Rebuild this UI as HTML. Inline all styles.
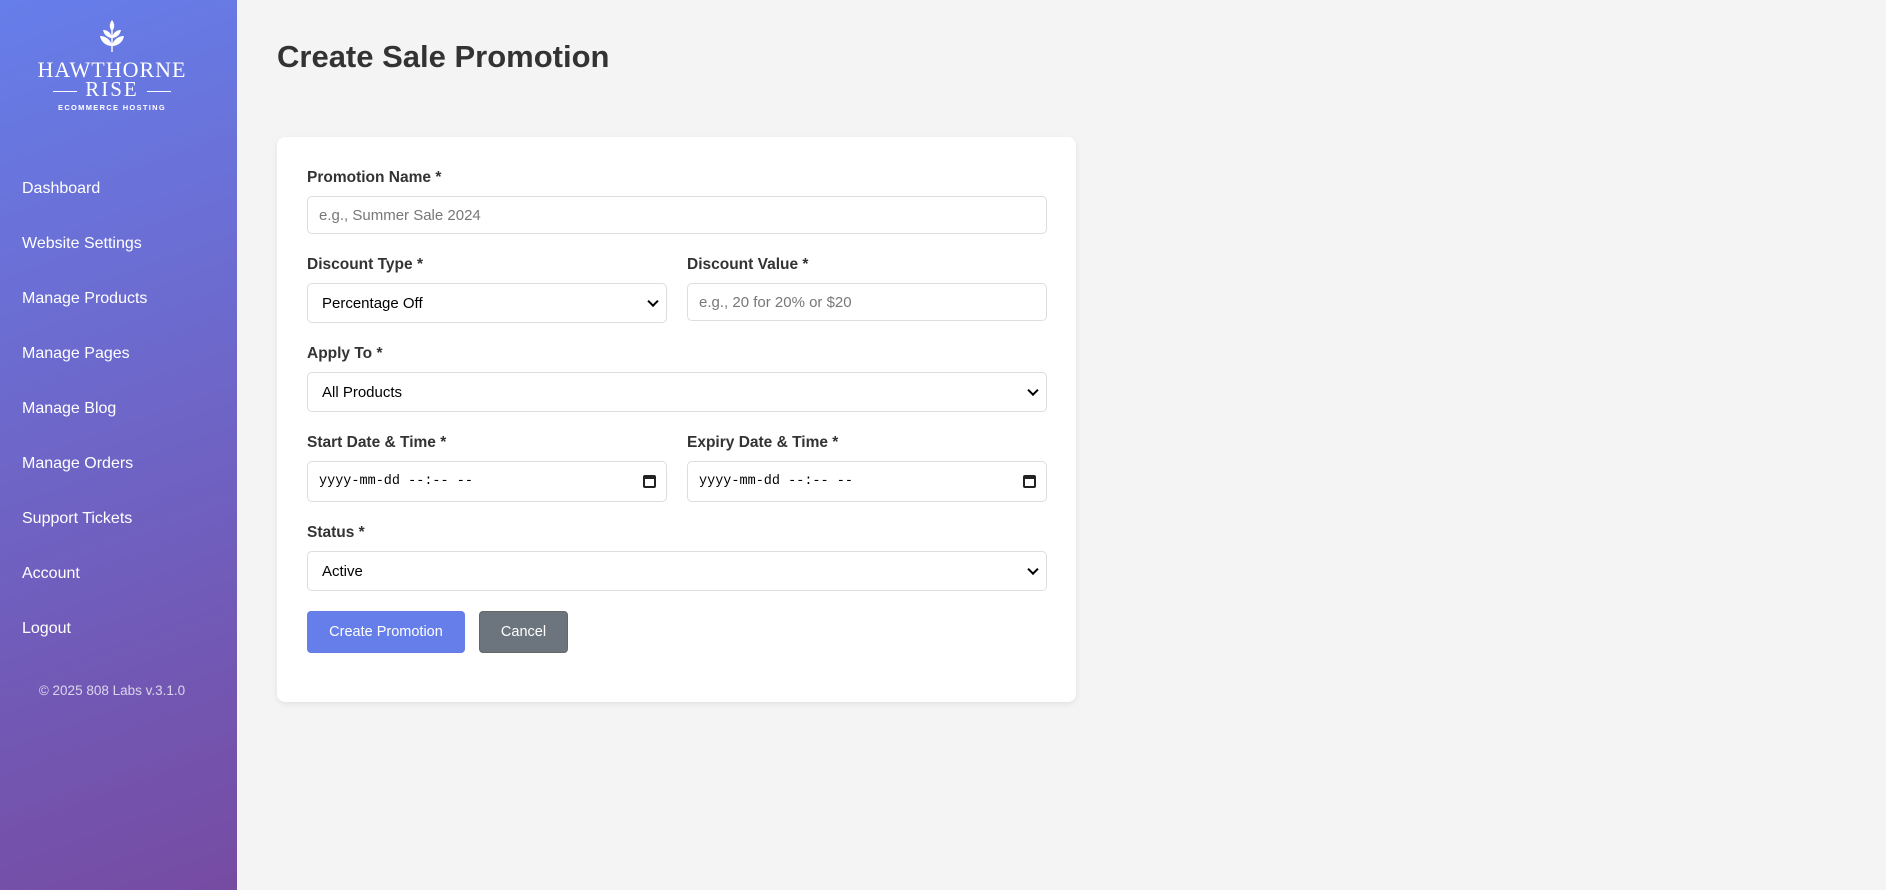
<!DOCTYPE html>
<html><head><meta charset="utf-8"><style>
*{box-sizing:border-box;margin:0;padding:0}
body{width:1886px;height:890px;background:#f4f4f4;font-family:"Liberation Sans",sans-serif;position:relative;overflow:hidden;color:#333}
.sb{position:absolute;left:0;top:0;width:237px;height:890px;background:linear-gradient(160deg,#667eea 0%,#764ba2 100%);color:#fff}
.logo{position:absolute;top:20px;left:0;width:224px;text-align:center;color:#fff}
.logo .h{font-family:"Liberation Serif",serif;font-size:22px;letter-spacing:1px;position:absolute;top:37px;width:100%}
.logo .r{font-family:"Liberation Serif",serif;font-size:21px;letter-spacing:2px;position:absolute;top:57px;width:100%}
.logo .r:before,.logo .r:after{content:"";display:inline-block;width:24px;height:1px;background:#fff;vertical-align:middle;margin:0 8px}
.logo .e{font-size:7.5px;letter-spacing:1.3px;font-weight:bold;position:absolute;top:83px;width:100%}
.nav a{position:absolute;left:22px;font-size:16px;color:#fff;text-decoration:none}
.copy{position:absolute;top:683px;left:0;width:224px;text-align:center;font-size:13.5px;color:rgba(255,255,255,.75)}
h1{position:absolute;left:277px;top:39px;font-size:31px;font-weight:bold;color:#333}
.card{position:absolute;left:277px;top:137px;width:799px;height:565px;background:#fff;border-radius:8px;box-shadow:0 2px 6px rgba(0,0,0,.08)}
.lbl{position:absolute;font-size:15.5px;font-weight:bold;color:#333}
.in{position:absolute;border:1px solid #ddd;border-radius:5px;background:#fff;font-size:15px;color:#777;padding-left:11px;display:flex;align-items:center}
.sel{color:#000;padding-left:14px}
.sel:after{content:"";position:absolute;right:9px;top:50%;width:6px;height:6px;border-right:2px solid #000;border-bottom:2px solid #000;transform:translateY(-70%) rotate(45deg)}
.dt{font-family:"Liberation Mono",monospace;color:#000;font-size:13.5px}
.cal{position:absolute;right:10px;top:50%;margin-top:-7px;width:13px;height:13px;border:2px solid #222;border-top-width:4px;border-radius:2px}
.btn{position:absolute;top:611px;height:42px;border-radius:4px;color:#fff;font-size:14.5px;display:flex;align-items:center;justify-content:center}
</style></head><body>
<div class="sb">
<div class="logo">
<svg style="position:absolute;left:98px;top:0" width="28" height="32" viewBox="0 0 28 32" fill="#fff"><path d="M14 0c3 4 3 8 0 11c-3-3-3-7 0-11z"/><path d="M14 26c-6 0-11-4-12-10c6 0 11 4 12 10z"/><path d="M14 26c6 0 11-4 12-10c-6 0-11 4-12 10z"/><path d="M14 18c-4 0-8-3-9-8c5 0 8 3 9 8z"/><path d="M14 18c4 0 8-3 9-8c-5 0-8 3-9 8z"/><rect x="13.3" y="8" width="1.4" height="24"/></svg>
<div class="h">HAWTHORNE</div>
<div class="r">RISE</div>
<div class="e">ECOMMERCE HOSTING</div>
</div>
<div class="nav">
<a style="top:180px">Dashboard</a>
<a style="top:235px">Website Settings</a>
<a style="top:290px">Manage Products</a>
<a style="top:345px">Manage Pages</a>
<a style="top:400px">Manage Blog</a>
<a style="top:455px">Manage Orders</a>
<a style="top:510px">Support Tickets</a>
<a style="top:565px">Account</a>
<a style="top:620px">Logout</a>
</div>
<div class="copy">© 2025 808 Labs v.3.1.0</div>
</div>
<h1>Create Sale Promotion</h1>
<div class="card"></div>
<div class="lbl" style="left:307px;top:169px">Promotion Name *</div>
<div class="in" style="left:307px;top:196px;width:740px;height:38px">e.g., Summer Sale 2024</div>
<div class="lbl" style="left:307px;top:256px">Discount Type *</div>
<div class="in sel" style="left:307px;top:283px;width:360px;height:40px">Percentage Off</div>
<div class="lbl" style="left:687px;top:256px">Discount Value *</div>
<div class="in" style="left:687px;top:283px;width:360px;height:38px">e.g., 20 for 20% or $20</div>
<div class="lbl" style="left:307px;top:345px">Apply To *</div>
<div class="in sel" style="left:307px;top:372px;width:740px;height:40px">All Products</div>
<div class="lbl" style="left:307px;top:434px">Start Date &amp; Time *</div>
<div class="in dt" style="left:307px;top:461px;width:360px;height:41px">yyyy-mm-dd --:-- --<span class="cal"></span></div>
<div class="lbl" style="left:687px;top:434px">Expiry Date &amp; Time *</div>
<div class="in dt" style="left:687px;top:461px;width:360px;height:41px">yyyy-mm-dd --:-- --<span class="cal"></span></div>
<div class="lbl" style="left:307px;top:524px">Status *</div>
<div class="in sel" style="left:307px;top:551px;width:740px;height:40px">Active</div>
<div class="btn" style="left:307px;width:158px;background:#667eea">Create Promotion</div>
<div class="btn" style="left:479px;width:89px;background:#6c757d;border:1px solid #666">Cancel</div>
</body></html>
